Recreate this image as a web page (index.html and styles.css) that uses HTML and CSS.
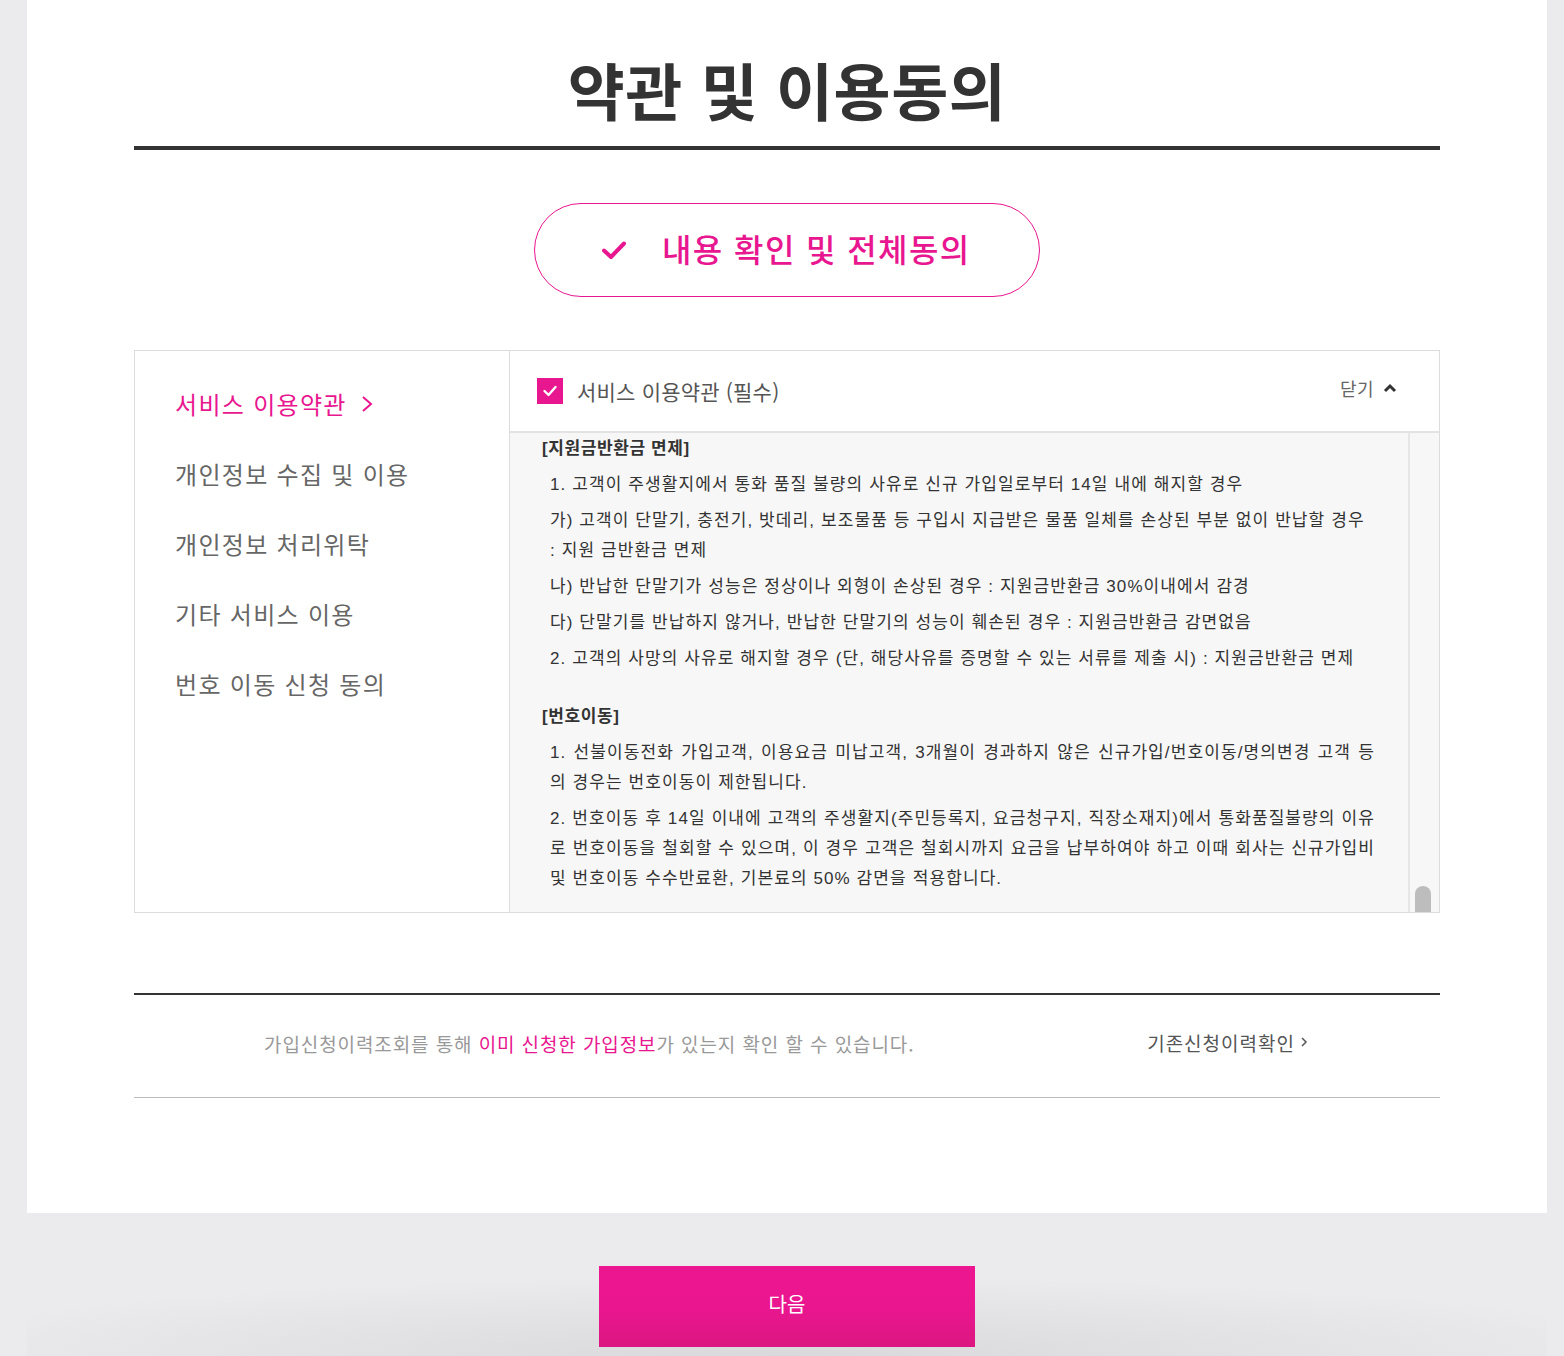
FILE: index.html
```html
<!DOCTYPE html>
<html lang="ko">
<head>
<meta charset="utf-8">
<title>약관 및 이용동의</title>
<link rel="stylesheet" href="styles.css">
</head>
<body>
<div class="page">
  <main class="panel">
    <h1 class="title">약관 및 이용동의</h1>

    <div class="agree-all-wrap">
      <button class="agree-all" type="button">
        <svg class="agree-check" width="26" height="20" viewBox="0 0 26 20"><path d="M3 10.5 L10 17 L23 3.5" fill="none" stroke="#e8168f" stroke-width="4" stroke-linecap="round" stroke-linejoin="round"/></svg>
        <span>내용 확인 및 전체동의</span>
      </button>
    </div>

    <section class="terms">
      <nav class="terms-nav">
        <a class="nav-item active">서비스 이용약관
          <svg class="nav-arrow" width="12" height="18" viewBox="0 0 12 18"><path d="M2 2 L10 9 L2 16" fill="none" stroke="#e8168f" stroke-width="2"/></svg>
        </a>
        <a class="nav-item">개인정보 수집 및 이용</a>
        <a class="nav-item">개인정보 처리위탁</a>
        <a class="nav-item">기타 서비스 이용</a>
        <a class="nav-item">번호 이동 신청 동의</a>
      </nav>
      <div class="terms-detail">
        <div class="detail-head">
          <label class="detail-label">
            <span class="checkbox">
              <svg width="16" height="14" viewBox="0 0 16 14"><path d="M2.5 7 L6.5 11 L13.5 3" fill="none" stroke="#fff" stroke-width="2.4" stroke-linecap="round" stroke-linejoin="round"/></svg>
            </span>
            <span class="detail-title">서비스 이용약관 (필수)</span>
          </label>
          <a class="close-btn">닫기
            <svg width="14" height="10" viewBox="0 0 14 10"><path d="M2 8 L7 3 L12 8" fill="none" stroke="#333" stroke-width="3"/></svg>
          </a>
        </div>
        <div class="detail-body">
          <div class="detail-text">
            <h3 class="sec-title">[지원금반환금 면제]</h3>
            <p>1. 고객이 주생활지에서 통화 품질 불량의 사유로 신규 가입일로부터 14일 내에 해지할 경우</p>
            <p>가) 고객이 단말기, 충전기, 밧데리, 보조물품 등 구입시 지급받은 물품 일체를 손상된 부분 없이 반납할 경우<br>: 지원 금반환금 면제</p>
            <p>나) 반납한 단말기가 성능은 정상이나 외형이 손상된 경우 : 지원금반환금 30%이내에서 감경</p>
            <p>다) 단말기를 반납하지 않거나, 반납한 단말기의 성능이 훼손된 경우 : 지원금반환금 감면없음</p>
            <p>2. 고객의 사망의 사유로 해지할 경우 (단, 해당사유를 증명할 수 있는 서류를 제출 시) : 지원금반환금 면제</p>
            <h3 class="sec-title sec-gap">[번호이동]</h3>
            <p class="just">1. 선불이동전화 가입고객, 이용요금 미납고객, 3개월이 경과하지 않은 신규가입/번호이동/명의변경 고객 등 의 경우는 번호이동이 제한됩니다.</p>
            <p class="just">2. 번호이동 후 14일 이내에 고객의 주생활지(주민등록지, 요금청구지, 직장소재지)에서 통화품질불량의 이유로 번호이동을 철회할 수 있으며, 이 경우 고객은 철회시까지 요금을 납부하여야 하고 이때 회사는 신규가입비 및 번호이동 수수반료환, 기본료의 50% 감면을 적용합니다.</p>
          </div>
          <div class="scrollbar"><span class="thumb"></span></div>
        </div>
      </div>
    </section>

    <div class="history">
      <p class="history-text">가입신청이력조회를 통해 <em>이미 신청한 가입정보</em>가 있는지 확인 할 수 있습니다.</p>
      <a class="history-link">기존신청이력확인
        <svg width="8" height="12" viewBox="0 0 8 12"><path d="M2 2 L6 6 L2 10" fill="none" stroke="#555" stroke-width="1.5"/></svg>
      </a>
    </div>
  </main>

  <div class="footer">
    <button class="next-btn" type="button">다음</button>
  </div>
</div>
</body>
</html>
```

FILE: styles.css
```css
* { box-sizing: border-box; }
html, body {
  margin: 0;
  padding: 0;
  background: #ebebed;
  font-family: "Noto Sans CJK KR", "Noto Sans", sans-serif;
  color: #333;
}
.page {
  width: 1520px;
  margin-left: 27px;
  min-height: 1356px;
  display: flex;
  flex-direction: column;
}
.panel {
  background: #fff;
  padding: 0 107px 115px;
}
.title {
  margin: 0;
  padding-top: 52px;
  padding-bottom: 20px;
  border-bottom: 4px solid #333;
  text-align: center;
  font-size: 62px;
  line-height: 74px;
  font-weight: 700;
  color: #333;
  letter-spacing: 0.5px;
}
.agree-all-wrap {
  display: flex;
  justify-content: center;
  padding: 53px 0;
}
.agree-all {
  width: 506px;
  height: 94px;
  border: 1px solid #e8168f;
  border-radius: 47px;
  background: #fff;
  display: flex;
  align-items: center;
  padding: 0 0 0 66px;
  font-family: inherit;
  cursor: pointer;
}
.agree-check { margin-right: 35px; }
.agree-all span {
  font-size: 32px;
  color: #e8168f;
  font-weight: 500;
  line-height: 1;
  margin-top: -4px;
  letter-spacing: 1.4px;
}
.terms {
  display: flex;
  height: 563px;
  border: 1px solid #dcdcdc;
}
.terms-nav {
  width: 375px;
  flex: none;
  border-right: 1px solid #dcdcdc;
  display: flex;
  flex-direction: column;
  padding: 17px 0 0 40px;
}
.nav-item {
  display: flex;
  align-items: center;
  height: 70px;
  font-size: 24px;
  color: #666;
  letter-spacing: 1.3px;
}
.nav-item.active { color: #e8168f; }
.nav-arrow { margin-left: 14px; margin-top: 2px; }
.terms-detail {
  flex: 1;
  display: flex;
  flex-direction: column;
  min-width: 0;
}
.detail-head {
  height: 82px;
  border-bottom: 2px solid #e3e3e3;
  display: flex;
  align-items: center;
  justify-content: space-between;
  padding: 0 42px 0 27px;
}
.detail-label { display: flex; align-items: center; }
.checkbox {
  width: 26px;
  height: 26px;
  background: #e8168f;
  display: flex;
  align-items: center;
  justify-content: center;
  margin-right: 14px;
}
.detail-title {
  font-size: 21px;
  color: #555;
  letter-spacing: 0.2px;
}
.close-btn {
  display: flex;
  align-items: center;
  font-size: 18px;
  color: #666;
  letter-spacing: 0.5px;
  margin-top: -6px;
}
.close-btn svg { margin-left: 9px; }
.detail-body {
  flex: 1;
  display: flex;
  background: #f7f7f7;
  min-height: 0;
  padding-right: 3px;
}
.detail-text {
  flex: 1;
  overflow: hidden;
  padding: 0 33px 0 32px;
  font-family: "Liberation Sans", "Noto Sans CJK KR", sans-serif;
  font-size: 17px;
  color: #333;
  letter-spacing: 1.1px;
}
.sec-title {
  margin: 0;
  font-size: 17px;
  font-weight: 700;
  line-height: 30px;
  margin-top: 1px;
  letter-spacing: 0.6px;
}
.sec-gap { margin-top: 28px; }
.detail-text p {
  margin: 6px 0 0 8px;
  line-height: 30px;
}
.detail-text p.just { text-align: justify; }
.scrollbar {
  width: 28px;
  flex: none;
  border-left: 2px solid #e6e6e6;
  display: flex;
  justify-content: center;
  align-items: flex-end;
}
.thumb {
  width: 16px;
  height: 26px;
  background: #bdbdbd;
  border-radius: 8px 8px 0 0;
}
.history {
  margin-top: 80px;
  height: 105px;
  border-top: 2px solid #333;
  border-bottom: 1px solid #bbb;
  display: flex;
  align-items: center;
  justify-content: space-between;
  padding: 0 132px 0 130px;
}
.history-text {
  margin: 0 0 6px;
  font-size: 19px;
  color: #999;
  letter-spacing: 0.9px;
}
.history-text em {
  font-style: normal;
  color: #e8168f;
}
.history-link {
  display: flex;
  align-items: center;
  font-size: 19px;
  color: #555;
  letter-spacing: 1px;
  margin-top: -8px;
}
.history-link svg { margin-left: 5px; }
.footer {
  flex: 1;
  display: flex;
  justify-content: center;
  padding-top: 53px;
  background: radial-gradient(ellipse 60% 80px at 50% 100%, #d9d9db 0%, #ebebed 100%);
}
.next-btn {
  width: 376px;
  height: 81px;
  border: none;
  padding: 0 0 6px;
  background: linear-gradient(#ec1690 0%, #ea1690 50%, #dc1680 100%);
  color: #fff;
  font-family: inherit;
  font-size: 20px;
  cursor: pointer;
}
```
